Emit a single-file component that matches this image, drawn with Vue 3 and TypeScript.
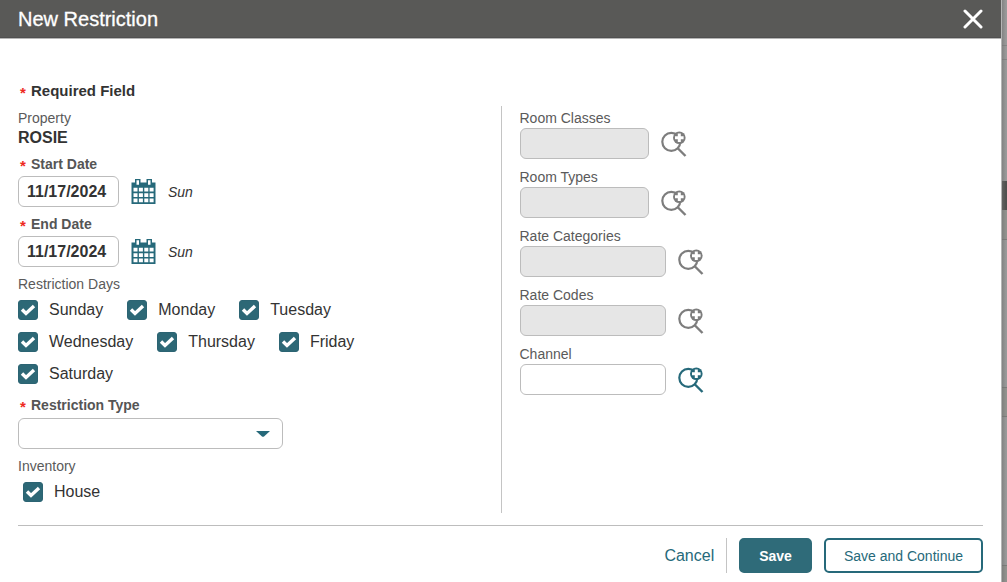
<script setup lang="ts">
import { ref, reactive } from 'vue'

interface DateField { id: string; label: string; value: string; day: string }
interface LookupField { id: string; label: string; value: string; disabled: boolean; wide: boolean }
interface DayOption { name: string; checked: boolean }

const dates = reactive<DateField[]>([
  { id: 'start-date', label: 'Start Date', value: '11/17/2024', day: 'Sun' },
  { id: 'end-date', label: 'End Date', value: '11/17/2024', day: 'Sun' },
])

const days = reactive<DayOption[]>(
  ['Sunday', 'Monday', 'Tuesday', 'Wednesday', 'Thursday', 'Friday', 'Saturday'].map((name) => ({ name, checked: true })),
)

const lookups = reactive<LookupField[]>([
  { id: 'room-classes', label: 'Room Classes', value: '', disabled: true, wide: false },
  { id: 'room-types', label: 'Room Types', value: '', disabled: true, wide: false },
  { id: 'rate-categories', label: 'Rate Categories', value: '', disabled: true, wide: true },
  { id: 'rate-codes', label: 'Rate Codes', value: '', disabled: true, wide: true },
  { id: 'channel', label: 'Channel', value: '', disabled: false, wide: true },
])

const restrictionType = ref('')
const house = ref(true)
</script>

<template>
  <div class="page">
    <form class="dialog" @submit.prevent>
      <header class="titlebar">
        <h1>New Restriction</h1>
        <button type="button" class="icon-button" aria-label="Close">
          <svg width="20" height="20" viewBox="0 0 20 20" fill="none" stroke="#fff" stroke-width="3" stroke-linecap="round">
            <path d="M2 2L18 18M18 2L2 18" />
          </svg>
        </button>
      </header>

      <div class="content">
        <p class="required-note"><span class="star">*</span>Required Field</p>

        <div class="columns">
          <section class="column column-main">
            <div class="property">
              <span class="label">Property</span>
              <strong>ROSIE</strong>
            </div>

            <div v-for="date in dates" :key="date.id" class="date-field">
              <label class="label label-required" :for="date.id"><span class="star">*</span>{{ date.label }}</label>
              <div class="date-row">
                <input :id="date.id" v-model="date.value" type="text" class="box date-input" />
                <button type="button" class="icon-button" :aria-label="date.label">
                  <svg width="25" height="25" viewBox="0 0 25 25">
                    <path fill="#26697a" d="M0.500 3.500H24.500V25H0.500Z" />
                    <path fill="#26697a" d="M4 0H9.500V7H4ZM15.500 0H21V7H15.500Z" />
                    <path fill="#fff" d="M5.500 1.300h2.500v4.500h-2.500zM17 1.300h2.500v4.500h-2.500z" />
                    <path
                      fill="#fff"
                      d="M2.500 8.800h4v3.800h-4zM7.900 8.800h4v3.800h-4zM13.300 8.800h4v3.800h-4zM18.600 8.800h4v3.800h-4zM2.500 14.200h4v3.800h-4zM7.900 14.200h4v3.800h-4zM13.300 14.200h4v3.800h-4zM18.600 14.200h4v3.800h-4zM2.500 19.600h4v3.600h-4zM7.900 19.600h4v3.600h-4zM13.300 19.600h4v3.600h-4zM18.600 19.600h4v3.600h-4z"
                    />
                  </svg>
                </button>
                <em>{{ date.day }}</em>
              </div>
            </div>

            <fieldset class="group">
              <legend class="label">Restriction Days</legend>
              <div class="days">
                <label v-for="day in days" :key="day.name" class="check">
                  <span class="check-box">
                    <input v-model="day.checked" type="checkbox" />
                    <svg width="20" height="20" viewBox="0 0 20 20" fill="none" stroke="#fff" stroke-width="3.400">
                      <path d="M4 9.500L8 13.500L16 6" />
                    </svg>
                  </span>
                  {{ day.name }}
                </label>
              </div>
            </fieldset>

            <div class="type-field">
              <label class="label label-required" for="restriction-type"><span class="star">*</span>Restriction Type</label>
              <div class="select-wrap">
                <select id="restriction-type" v-model="restrictionType" class="box">
                  <option value=""></option>
                </select>
                <svg width="14" height="6" viewBox="0 0 14 6"><path fill="#26697a" d="M0 0H14L8 5.500Q7 6.200 6 5.500Z" /></svg>
              </div>
            </div>

            <fieldset class="group">
              <legend class="label">Inventory</legend>
              <div class="inventory">
                <label class="check">
                  <span class="check-box">
                    <input v-model="house" type="checkbox" />
                    <svg width="20" height="20" viewBox="0 0 20 20" fill="none" stroke="#fff" stroke-width="3.400">
                      <path d="M4 9.500L8 13.500L16 6" />
                    </svg>
                  </span>
                  House
                </label>
              </div>
            </fieldset>
          </section>

          <section class="column column-lookups">
            <div v-for="field in lookups" :key="field.id" class="lookup">
              <label class="label" :for="field.id">{{ field.label }}</label>
              <div class="lookup-row">
                <input
                  :id="field.id"
                  v-model="field.value"
                  type="text"
                  class="box lookup-input"
                  :class="{ wide: field.wide }"
                  :disabled="field.disabled"
                />
                <button
                  type="button"
                  class="icon-button lookup-button"
                  :disabled="field.disabled"
                  :aria-label="field.label"
                >
                  <svg width="26" height="26" viewBox="0 0 26 26">
                    <g fill="none" stroke="currentColor">
                      <circle cx="10.300" cy="10.800" r="9" stroke-width="2.200" />
                      <path d="M16.500 17L24.500 25" stroke-width="2.400" />
                    </g>
                    <circle cx="18.300" cy="6.800" r="6.300" fill="currentColor" />
                    <path d="M18.300 2.500V11.100M14 6.800H22.600" fill="none" stroke="#fff" stroke-width="3" />
                  </svg>
                </button>
              </div>
            </div>
          </section>
        </div>
      </div>

      <footer class="actions">
        <a href="#" class="cancel">Cancel</a>
        <button type="submit" class="button primary">Save</button>
        <button type="button" class="button secondary">Save and Continue</button>
      </footer>
    </form>
    <div class="backdrop"></div>
  </div>
</template>

<style>
body {
  margin: 0;
}
</style>

<style scoped>
.page {
  display: flex;
  min-height: 100vh;
  font-family: "Liberation Sans", Arial, Helvetica, sans-serif;
  color: #333;
  background: #fff;
}

.page * {
  box-sizing: border-box;
}

input,
select,
button {
  font: inherit;
}

.dialog {
  flex: 1;
  display: flex;
  flex-direction: column;
  min-width: 0;
}

.titlebar {
  display: flex;
  align-items: center;
  justify-content: space-between;
  height: 38px;
  padding: 0 18px;
  background: #595957;
  border-bottom: 1px solid #505050;
  box-shadow: 0 1px 0 #b5b5b5;
}

.titlebar h1 {
  margin: 0;
  font-size: 20px;
  font-weight: 400;
  line-height: 24px;
  color: #fff;
  -webkit-text-stroke: 0.3px #fff;
}

.icon-button {
  display: flex;
  padding: 0;
  border: 0;
  background: none;
  color: #26697a;
}

.content {
  flex: 1;
  padding: 43px 18px 0;
}

.required-note {
  display: flex;
  margin: 0 0 5px;
  font-size: 15px;
  font-weight: 700;
  line-height: 20px;
}

.star {
  width: 13px;
  padding: 2px 0 0 2px;
  font-size: 15px;
  font-weight: 700;
  line-height: 20px;
  height: 20px;
  color: #ee2a22;
}

.columns {
  display: grid;
  grid-template-columns: 1fr 1fr;
}

.column {
  padding-top: 2px;
}

.column-main {
  padding-right: 18px;
}

.column-lookups {
  min-height: 407px;
  padding-left: 18px;
  border-left: 1px solid #c4c4c4;
}

.label {
  display: flex;
  padding: 0;
  font-size: 14px;
  line-height: 20px;
  color: #5a5a5a;
}

.label-required {
  font-weight: 700;
  color: #555;
}

.property {
  margin-bottom: 6px;
}

.property strong {
  display: block;
  font-size: 16px;
  line-height: 20px;
}

.date-field {
  display: flex;
  flex-direction: column;
  gap: 2px;
  margin-bottom: 7px;
}

.date-row {
  display: flex;
  align-items: center;
  gap: 12px;
}

.date-row em {
  font-size: 14px;
}

.box {
  height: 31px;
  margin: 0;
  border: 1px solid #bcbcbc;
  border-radius: 6px;
  background: #fff;
  color: #333;
}

.date-input {
  width: 101px;
  padding: 0 8px;
  font-size: 16px;
  font-weight: 700;
}

.group {
  min-width: 0;
  margin: 0;
  padding: 0;
  border: 0;
}

.days {
  display: flex;
  flex-wrap: wrap;
  gap: 12px 24px;
  max-width: 360px;
  padding: 6px 0 11px;
}

.inventory {
  padding: 6px 5px 0;
}

.check {
  display: flex;
  align-items: center;
  gap: 11px;
  font-size: 16px;
  line-height: 20px;
}

.check-box {
  display: grid;
}

.check-box > * {
  grid-area: 1 / 1;
}

.check-box svg {
  visibility: hidden;
  pointer-events: none;
}

.check-box input {
  appearance: none;
  width: 20px;
  height: 20px;
  margin: 0;
  border: 1px solid #2c6473;
  border-radius: 3px;
  background: #fff;
}

.check-box input:checked {
  background: #2d6876;
}

.check-box input:checked + svg {
  visibility: visible;
}

.type-field {
  margin-bottom: 7px;
}

.select-wrap {
  display: grid;
  align-items: center;
  width: 265px;
  margin-top: 3px;
}

.select-wrap > * {
  grid-area: 1 / 1;
}

.select-wrap select {
  appearance: none;
  width: 100%;
  padding: 0 28px 0 8px;
}

.select-wrap svg {
  justify-self: end;
  margin-right: 13px;
  pointer-events: none;
}

.lookup {
  margin-bottom: 8px;
}

.lookup-row {
  display: flex;
  align-items: center;
  gap: 12px;
}

.lookup-input {
  width: 129px;
  padding: 0 8px;
}

.lookup-input.wide {
  width: 146px;
}

.lookup-input:disabled {
  background: #e6e6e6;
}

.lookup-button:disabled {
  color: #7d7d7d;
}

.actions {
  display: flex;
  align-items: center;
  justify-content: flex-end;
  margin: 0 18px;
  padding: 12px 0 9px;
  border-top: 1px solid #bdbdbd;
}

.cancel {
  padding-right: 12px;
  margin-right: 12px;
  border-right: 1px solid #c4c4c4;
  font-size: 16px;
  line-height: 35px;
  color: #26697a;
  text-decoration: none;
}

.button {
  height: 35px;
  padding: 0 18px;
  border: 2px solid #26697a;
  border-radius: 5px;
  font-size: 14px;
}

.primary {
  background: #2f6b79;
  border-color: #2f6b79;
  color: #fff;
  font-weight: 700;
}

.secondary {
  margin-left: 12px;
  background: #fff;
  color: #26697a;
}

.backdrop {
  width: 6px;
  background:
    linear-gradient(90deg, #b5b5b5 1px, #70707088 1px, transparent 5px),
    linear-gradient(
      #999 45px, #858585 45px 46px, #999 46px 59px, #858585 59px 60px,
      #999 60px 181px, #50504e 181px 210px, #92928e 210px 239px, #7c7c7a 239px 240px,
      #999 240px 387px, #7c7c7a 387px 388px, #92928e 388px 416px, #7c7c7a 416px 417px,
      #999 417px 565px, #7c7c7a 565px 566px, #92928e 566px
    );
}
</style>
